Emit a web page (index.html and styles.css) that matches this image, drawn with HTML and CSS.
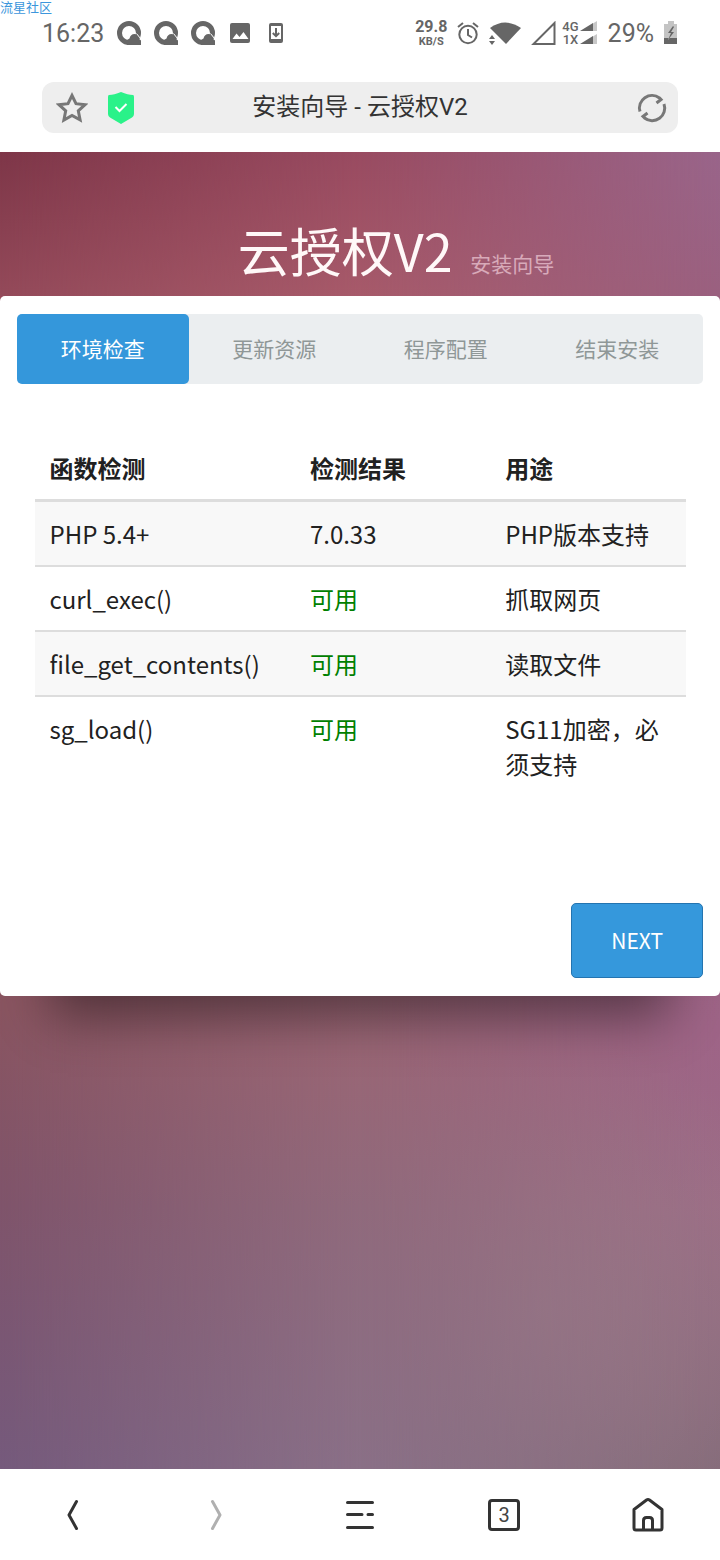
FILE: index.html
```
<!DOCTYPE html>
<html lang="zh-CN">
<head>
<meta charset="UTF-8">
<meta name="viewport" content="width=device-width, initial-scale=1.0">
<title>安装向导 - 云授权V2</title>
<link rel="stylesheet" href="styles.css">
</head>
<body>

<div class="watermark">流星社区</div>

<div class="status">
    <div class="status-left">
        <span class="clock">16:23</span>
        <svg width="24" height="24" viewBox="0 0 24 24"><circle class="ring" cx="12" cy="12" r="9.500"/><path class="fill" d="M10 24q-1.500-5 2.500-6.500 1-4.500 5-4.500 3 0 4 4.500l2.500 2V24z"/><path class="cut" d="M19.500 12.500l4 5"/></svg>
        <svg width="24" height="24" viewBox="0 0 24 24"><circle class="ring" cx="12" cy="12" r="9.500"/><path class="fill" d="M10 24q-1.500-5 2.500-6.500 1-4.500 5-4.500 3 0 4 4.500l2.500 2V24z"/><path class="cut" d="M19.500 12.500l4 5"/></svg>
        <svg width="24" height="24" viewBox="0 0 24 24"><circle class="ring" cx="12" cy="12" r="9.500"/><path class="fill" d="M10 24q-1.500-5 2.500-6.500 1-4.500 5-4.500 3 0 4 4.500l2.500 2V24z"/><path class="cut" d="M19.500 12.500l4 5"/></svg>
        <svg width="24" height="20" viewBox="0 0 24 20"><rect class="fill" x="2" width="20" height="20" rx="2"/><path fill="#fff" d="M4.500 16l4-5.500 3 3.500 4-5 5 7z"/></svg>
        <svg class="phone" width="14" height="20" viewBox="0 0 14 20"><path class="fill" fill-rule="evenodd" d="M2 0h10a2 2 0 0 1 2 2v16a2 2 0 0 1-2 2H2a2 2 0 0 1-2-2V2a2 2 0 0 1 2-2zM2 3v13h10V3z"/><path class="line" d="M7 5v8M3.800 10L7 13.200l3.200-3.200"/></svg>
    </div>
    <div class="status-right">
        <span class="speed"><b>29.8</b><small>KB/S</small></span>
        <svg width="22" height="24" viewBox="0 0 22 24"><circle class="line" cx="11" cy="13.500" r="8.700"/><path class="line" d="M11 8v6l4 2.500M1 6l5-4M21 6l-5-4"/></svg>
        <svg width="32" height="24" viewBox="0 0 32 24"><path class="fill" d="M1 7Q16-4 32 7L17 23z"/><path class="fill" d="M0 18l3-4 3 4zM0 20h6l-3 4z"/></svg>
        <svg width="25" height="24" viewBox="0 0 25 24"><path class="line" d="M23.500 2v21H2.500z"/></svg>
        <span class="net"><b>4G</b><b>1X</b></span>
        <svg class="bars" width="18" height="24" viewBox="0 0 18 24"><path fill="#c8c8c8" d="M12 3l5-3v10h-5zM12 16l5-3v10h-5z"/><path class="fill" d="M0 10L13 2v8zM0 23l13-8v8z"/></svg>
        <span class="clock">29%</span>
        <svg width="14" height="24" viewBox="0 0 14 24"><path fill="#c4c4c4" d="M4 0h6v3h3v15H0V3h4z"/><path class="fill" d="M0 17h13v6H0zM9 5l-5 7h3l-3 7 6-8H7l3-5z"/></svg>
    </div>
</div>

<div class="address">
    <button class="icon" aria-label="收藏"><svg width="32" height="32" viewBox="0 0 32 32"><path class="star" d="M16 3.500l4 8.200 9 1-6.700 6.200 1.800 9L16 23.500 7.900 28l1.800-9.100L3 12.700l9-1z"/></svg></button>
    <svg class="shield" width="26" height="32" viewBox="0 0 26 32"><path fill="#2af289" d="M13 0q7 3 12 3 1 0 1 2v17q0 2-2 3.500L13 32 2 25.500Q0 24 0 22V5q0-2 1-2 5 0 12-3z"/><path fill="none" stroke="#fff" stroke-width="2" d="M7.500 15l4 4 7-7"/></svg>
    <span class="page-name">安装向导 - 云授权V2</span>
    <button class="icon" aria-label="刷新"><svg width="32" height="32" viewBox="0 0 32 32"><path class="reload" d="M4 19.500A12.500 12.500 0 0 1 23.500 6l1.500 1.500-4.500 3.500M28 12A12.500 12.500 0 0 1 8.500 26L7 24.500l4.500-3.500"/></svg></button>
</div>

<main>
    <h1>云授权V2 <small>安装向导</small></h1>
    <div class="card">
        <ol class="steps">
            <li class="active">环境检查</li>
            <li>更新资源</li>
            <li>程序配置</li>
            <li>结束安装</li>
        </ol>
        <table>
            <thead>
                <tr><th class="wide">函数检测</th><th>检测结果</th><th>用途</th></tr>
            </thead>
            <tbody>
                <tr><td>PHP 5.4+</td><td>7.0.33</td><td>PHP版本支持</td></tr>
                <tr><td>curl_exec()</td><td class="ok">可用</td><td>抓取网页</td></tr>
                <tr><td>file_get_contents()</td><td class="ok">可用</td><td>读取文件</td></tr>
                <tr><td>sg_load()</td><td class="ok">可用</td><td>SG11加密，必须支持</td></tr>
            </tbody>
        </table>
        <div class="actions"><button class="next">NEXT</button></div>
    </div>
</main>

<nav>
    <button aria-label="后退"><svg width="32" height="36" viewBox="0 0 32 36"><path d="M20.500 4.500L13 18 20.500 31.500"/></svg></button>
    <button aria-label="前进" disabled><svg width="32" height="36" viewBox="0 0 32 36"><path d="M12.500 4.500L20 18 12.500 31.500"/></svg></button>
    <button aria-label="菜单"><svg width="32" height="36" viewBox="0 0 32 36"><path d="M3.500 5.500h25M3.500 17.500h14.500M24 17.500h4.500M3.500 30.500h25"/></svg></button>
    <button aria-label="窗口"><span class="tabs">3</span></button>
    <button aria-label="主页"><svg width="32" height="36" viewBox="0 0 32 36"><path d="M2 12.500L14.500 3q1.500-1 3 0L30 12.500V31q0 2-2 2h-24Q2 33 2 31zM11.500 32V23.500q0-3 3-3h3q3 0 3 3v8.500"/></svg></button>
</nav>

</body>
</html>
```

FILE: styles.css
```
* {
    box-sizing: border-box;
}
body {
    margin: 0;
    min-height: 100vh;
    display: flex;
    flex-direction: column;
    background: #fff;
    color: #212121;
    font-family: "Noto Sans CJK SC", sans-serif;
    font-size: 24px;
    line-height: 35px;
}
button {
    padding: 0;
    border: 0;
    background: none;
    font: inherit;
    color: inherit;
}
svg {
    display: block;
    flex: none;
}
.watermark {
    position: absolute;
    left: 0;
    top: 0;
    color: #3c96dc;
    font-size: 13px;
    line-height: 13px;
}

/* status bar */
.status {
    height: 82px;
    padding: 16px 42px 0;
    display: flex;
    justify-content: space-between;
    color: #666;
    font-family: Roboto, sans-serif;
}
.status-left, .status-right {
    display: flex;
    align-items: center;
    height: 34px;
}
.status-left {
    gap: 13px;
}
.status-right {
    gap: 10px;
}
.clock {
    font-size: 25px;
}
.phone {
    margin-left: 4px;
}
.fill {
    fill: #666;
}
.line {
    fill: none;
    stroke: #666;
    stroke-width: 2;
}
.ring {
    fill: none;
    stroke: #666;
    stroke-width: 5;
}
.cut {
    fill: none;
    stroke: #fff;
    stroke-width: 1;
}
.speed, .net {
    display: flex;
    flex-direction: column;
    align-items: center;
    line-height: 13px;
}
.speed b {
    font-size: 16px;
    font-weight: 700;
    line-height: 16px;
}
.speed small {
    font-size: 11px;
    font-weight: 700;
}
.net b {
    font-size: 13px;
    font-weight: 500;
}
.net {
    margin-left: -4px;
}
.bars {
    margin-left: -9px;
}

/* address bar */
.address {
    margin: 0 42px 19px;
    height: 51px;
    padding: 0 10px 0 14px;
    display: flex;
    align-items: center;
    border-radius: 12px;
    background: #eee;
    color: #333;
}
.shield {
    margin-left: 20px;
}
.page-name {
    flex: 1;
    padding-right: 50px;
    text-align: center;
    font-family: Roboto, "Noto Sans CJK SC", sans-serif;
}
.star, .reload {
    fill: none;
    stroke: #777;
    stroke-width: 3;
}

/* page: three vertical blends, faded into each other left to right */
main {
    flex: 1;
    position: relative;
    isolation: isolate;
    background: linear-gradient(#7e3648, #944a5a 11%, #8a5561 65%, #7f546b 80%, #755a7c);
}
main::before, main::after {
    content: "";
    position: absolute;
    inset: 0;
    z-index: -1;
}
main::before {
    background: linear-gradient(#994b61, #a75a6a 11%, #996675 68%, #906a7c 80%, #8a7087);
    mask-image: linear-gradient(to right, transparent, #000 50%);
}
main::after {
    background:
        radial-gradient(circle at 75% 88%, rgba(158, 130, 140, .6), rgba(158, 130, 140, 0) 280px),
        linear-gradient(#99658a, #9a607f 11%, #9e6487 67%, #9b6b85 80%, #846b79);
    mask-image: linear-gradient(to right, transparent 50%, #000);
}
h1 {
    margin: 0;
    padding: 60px 0 0 72px;
    height: 144px;
    text-align: center;
    color: #fff8f8;
    font-size: 52px;
    font-weight: 400;
    line-height: 76px;
}
h1 small {
    margin-left: 6px;
    color: rgba(255, 225, 235, .6);
    font-size: 21px;
    font-weight: 400;
}
.card {
    padding: 18px 17px;
    border-radius: 5px;
    background: #fff;
    box-shadow: 0 70px 50px -50px rgba(0, 0, 0, .45);
}
.steps {
    display: flex;
    margin: 0 0 52px;
    padding: 0;
    list-style: none;
    border-radius: 5px;
    background: #ebeef0;
    color: #8f9797;
    font-size: 21px;
    text-align: center;
}
.steps li {
    flex: 1;
    padding: 17px 0 18px;
    border-radius: 5px;
}
.steps .active {
    background: #3497db;
    color: #fff;
}
table {
    width: calc(100% - 35px);
    margin: 0 auto;
    table-layout: fixed;
    border-collapse: separate;
    border-spacing: 0;
}
th, td {
    padding: 14px 15px;
    text-align: left;
    vertical-align: top;
}
th {
    border-bottom: 3px solid #ddd;
    font-weight: 700;
}
.wide {
    width: 40%;
}
td {
    border-bottom: 2px solid #ddd;
}
tbody tr:nth-child(odd) {
    background: #f8f8f8;
}
tbody tr:last-child td {
    border-bottom: 0;
}
.ok {
    color: #008000;
}
.actions {
    margin-top: 108px;
    display: flex;
    justify-content: flex-end;
}
.next {
    padding: 19px 39px;
    border: 1px solid #2474b0;
    border-radius: 5px;
    background: #3598dc;
    color: #fff;
    font-size: 21px;
}

/* bottom toolbar */
nav {
    height: 91px;
    display: flex;
}
nav button {
    flex: 1;
    display: flex;
    align-items: center;
    justify-content: center;
}
nav path {
    fill: none;
    stroke: #333;
    stroke-width: 3;
    stroke-linecap: round;
    stroke-linejoin: round;
}
nav button:disabled path {
    stroke: #b0b0b0;
}
.tabs {
    width: 32px;
    height: 32px;
    border: 3px solid #333;
    border-radius: 4px;
    color: #444;
    font-family: Roboto, sans-serif;
    font-size: 20px;
    line-height: 26px;
}
```
